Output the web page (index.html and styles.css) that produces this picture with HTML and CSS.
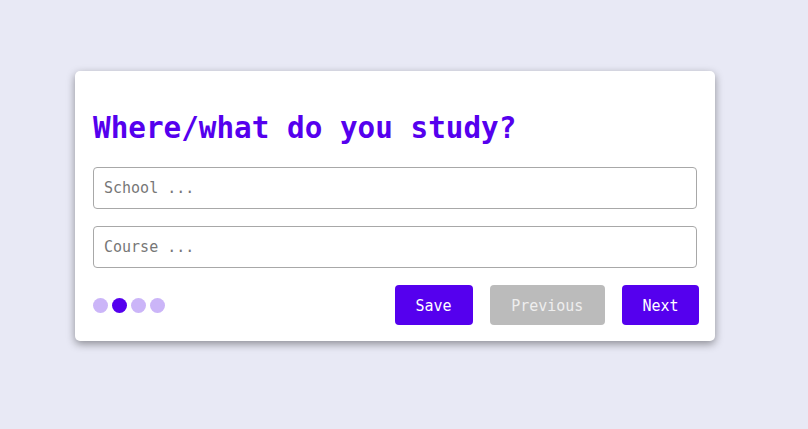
FILE: index.html
```html
<!DOCTYPE html>
<html>
<head>
<meta charset="utf-8">
<link rel="stylesheet" href="styles.css">
</head>
<body>
<div class="card">
  <h1 class="title">Where/what do you study?</h1>
  <input class="field" type="text" placeholder="School ...">
  <input class="field" type="text" placeholder="Course ...">
  <div class="footer">
    <div class="dots">
      <span class="dot"></span>
      <span class="dot active"></span>
      <span class="dot"></span>
      <span class="dot"></span>
    </div>
    <div class="buttons">
      <button class="btn primary">Save</button>
      <button class="btn disabled">Previous</button>
      <button class="btn primary next">Next</button>
    </div>
  </div>
</div>
</body>
</html>
```
FILE: styles.css
```css
html, body {
  margin: 0;
  padding: 0;
}
body {
  background: #e8e9f5;
  font-family: "DejaVu Sans Mono", "Liberation Mono", monospace;
  padding: 71px 0 0 75px;
  height: 429px;
  box-sizing: border-box;
}
.card {
  width: 640px;
  box-sizing: border-box;
  background: #fff;
  border-radius: 5px;
  padding: 39px 18px 16px 18px;
  box-shadow: 0 3px 8px rgba(0, 0, 0, 0.4);
  display: flex;
  flex-direction: column;
}
.title {
  margin: 0 0 21px 0;
  font-size: 29.3px;
  line-height: 36px;
  font-weight: bold;
  color: #5500ee;
}
.field {
  height: 42px;
  box-sizing: border-box;
  border: 1px solid #a8a8a8;
  border-radius: 4px;
  padding: 0 10px;
  font-family: inherit;
  font-size: 15px;
  margin: 0 0 17px 0;
  outline: none;
}
.field::placeholder {
  color: #777;
}
.footer {
  display: flex;
  align-items: center;
  justify-content: space-between;
  margin-right: -2px;
}
.dots {
  display: flex;
  gap: 4px;
}
.dot {
  width: 15px;
  height: 15px;
  border-radius: 50%;
  background: #cbb5f8;
}
.dot.active {
  background: #5500ee;
}
.buttons {
  display: flex;
  gap: 17px;
}
.btn {
  height: 40px;
  border: none;
  border-radius: 4px;
  padding: 1px 21px 0 21px;
  font-family: inherit;
  font-size: 15px;
  color: #fff;
}
.btn.primary {
  background: #5500ee;
}
.btn.next {
  padding: 1px 20.5px 0 20.5px;
}
.btn.disabled {
  background: #bbbbbb;
  color: #eeeeee;
  padding: 1px 21.5px 0 21.5px;
}
```
